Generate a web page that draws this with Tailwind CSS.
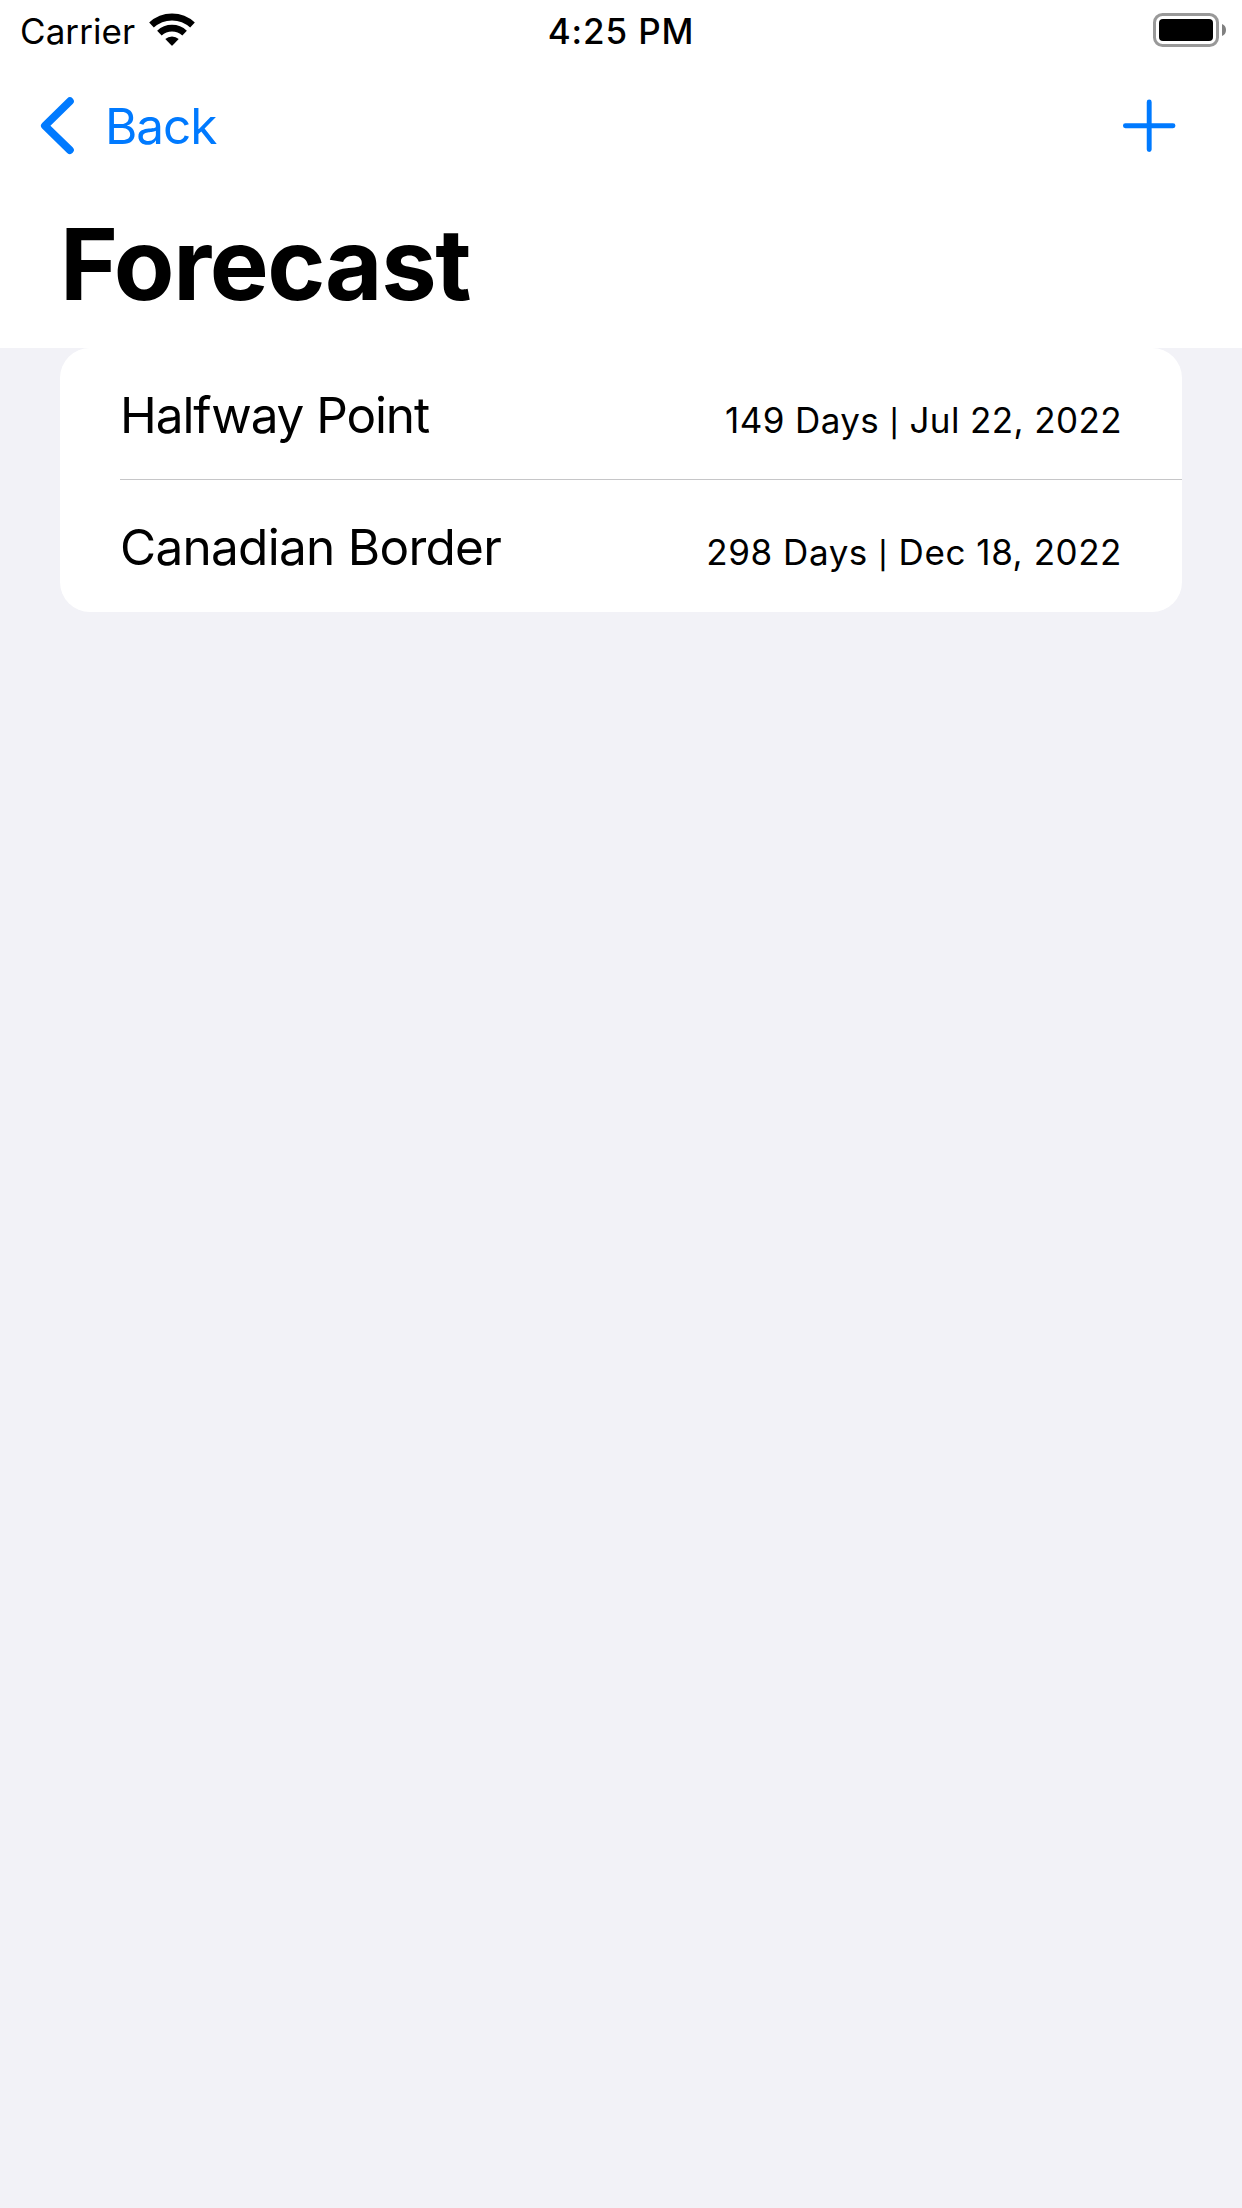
<!DOCTYPE html>
<html lang="en">
<head>
<meta charset="utf-8">
<title>Forecast</title>
<script src="https://cdn.jsdelivr.net/npm/@tailwindcss/browser@4"></script>
</head>
<body class="h-[2208px] w-[1242px] overflow-hidden bg-[#f2f2f7] font-[Inter,sans-serif] text-black">
  <header class="h-[348px] bg-white">
    <!-- Status bar -->
    <div class="grid h-[60px] grid-cols-3 text-[35px] leading-[62px] whitespace-nowrap">
      <div class="flex pl-5">
        <span class="w-[127px] tracking-[0.075px]">Carrier</span>
        <svg class="mt-[10px] h-10 w-[50px]" viewBox="147 10 50 40" fill="none">
          <path d="M151.500 25.100A30 30 0 0 1 192.500 25.100" stroke="#000" stroke-width="6.800"/>
          <path d="M159.400 33.100A18.400 18.400 0 0 1 184.600 33.100" stroke="#000" stroke-width="6.600"/>
          <path d="M165.300 39.100A9.600 9.600 0 0 1 178.700 39.100L172.700 45.300Q172 46 171.300 45.300Z" fill="#000"/>
        </svg>
      </div>
      <div class="text-center font-medium tracking-[0.855px]">4:25 PM</div>
      <div class="flex justify-end pr-4">
        <svg class="mt-[12px] h-9 w-[75px]" viewBox="1151 12 75 36" fill="none">
          <rect x="1154.500" y="14.500" width="63" height="31" rx="8" stroke="#999" stroke-width="3"/>
          <rect x="1159" y="19" width="54" height="22" rx="4" fill="#000"/>
          <path d="M1222 24Q1226 25.500 1226 30T1222 36Z" fill="#808080"/>
        </svg>
      </div>
    </div>
    <!-- Navigation bar -->
    <nav class="flex h-[132px] items-center justify-between pr-[64px] pl-[38px] text-[#007aff]">
      <a class="flex items-center">
        <svg class="h-[60px] w-[67px]" viewBox="38 96 67 60" fill="none">
          <path d="M69.900 101.200L44.900 125.700L69.900 150.100" stroke="currentColor" stroke-width="7.800" stroke-linecap="round" stroke-linejoin="round"/>
        </svg>
        <span class="text-[49.5px] leading-[60px] tracking-[-1.1px]">Back</span>
      </a>
      <svg class="h-[60px] w-[58px]" viewBox="1120 96 58 60" fill="none">
        <path d="M1149.200 102V149.500M1125.400 125.700H1173" stroke="currentColor" stroke-width="4.900" stroke-linecap="round"/>
      </svg>
    </nav>
    <h1 class="pl-[60px] text-[99px] leading-[144px] font-bold tracking-[-1.4px]">Forecast</h1>
  </header>
  <main class="px-[60px]">
    <ul class="overflow-hidden rounded-[30px] bg-white pl-[60px] whitespace-nowrap">
      <li class="flex h-[132px] items-baseline justify-between border-b border-[#c6c6c8] pr-[60px]">
        <span class="text-[49.5px] leading-[134px] tracking-[-1.1px]">Halfway Point</span>
        <span class="text-[35px] leading-[60px] tracking-[0.4px]">149 Days <span class="text-[27px] font-medium">|</span> Jul 22, 2022</span>
      </li>
      <li class="flex h-[132px] items-baseline justify-between pr-[60px]">
        <span class="text-[49.5px] leading-[134px] tracking-[-0.72px]">Canadian Border</span>
        <span class="text-[35px] leading-[60px] tracking-[0.56px]">298 Days <span class="text-[27px] font-medium">|</span> Dec 18, 2022</span>
      </li>
    </ul>
  </main>
</body>
</html>
